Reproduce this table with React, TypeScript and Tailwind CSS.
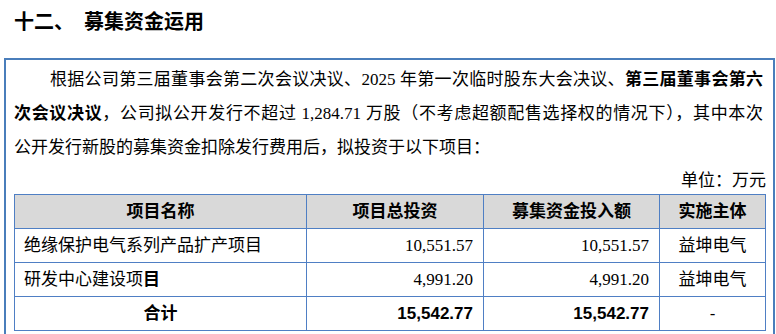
const serif = "font-['Liberation_Serif','Noto_Sans_CJK_SC',serif]";
const sans = "font-['Liberation_Sans','Noto_Sans_CJK_SC',sans-serif]";

const rows = [
	{ name: '绝缘保护电气系列产品扩产项目', total: '10,551.57', raised: '10,551.57', owner: '益坤电气' },
	{ name: '研发中心建设项', tail: '目', total: '4,991.20', raised: '4,991.20', owner: '益坤电气' },
];

const cell = 'border border-[#4f7fc4] h-[34px] p-0';

const App = () => {
	return (
		<div className="w-[776px] h-[334px] overflow-hidden bg-white text-black">
			{/* heading */}
			<div className={`${sans} flex items-center pl-[14px] pt-[8px] h-[58px] pb-[22px] text-[20px] font-bold leading-[28px]`}>
				<span>十二、</span>
				<span className="ml-[10px]">募集资金运用</span>
			</div>

			<div className="ml-[4px] mr-[1px] border-l-2 border-t-2 border-r-2 border-[#4a7ebb] h-[300px]">
				<div className={`${serif} pl-[8px] pr-[10px] pt-[3px] text-[17px] leading-[34px]`}>
					<div className="text-justify [text-align-last:justify] indent-[36px]">
						根据公司第三届董事会第二次会议决议、2025 年第一次临时股东大会决议、
						<span className={`${sans} font-bold`}>第三届董事会第六</span>
					</div>
					<div className="text-justify [text-align-last:justify]">
						<span className={`${sans} font-bold`}>次会议决议</span>，公司拟公开发行不超过 1,284.71
						万股（不考虑超额配售选择权的情况下），其中本次
					</div>
					<div>公开发行新股的募集资金扣除发行费用后，拟投资于以下项目：</div>
					<div className="h-[29px] flex items-end justify-end leading-[26px] mr-[-3px]">
						单位：万元
					</div>
				</div>

				<div className="ml-[8px] mr-[7px]">
					<table className="w-full table-fixed border-collapse text-[17px]">
						<colgroup>
							<col className="w-[292px]" />
							<col className="w-[177px]" />
							<col className="w-[176px]" />
							<col />
						</colgroup>
						<thead>
							<tr className={`${sans} bg-[#d9d9d9] font-bold`}>
								<th className={cell}>项目名称</th>
								<th className={cell}>项目总投资</th>
								<th className={cell}>募集资金投入额</th>
								<th className={cell}>实施主体</th>
							</tr>
						</thead>
						<tbody className={serif}>
							{rows.map((r) => (
								<tr key={r.name}>
									<td className={`${cell} text-left pl-[9px]`}>
										{r.name}
										{r.tail && <span className={`${sans} font-bold`}>{r.tail}</span>}
									</td>
									<td className={`${cell} text-right pr-[10px]`}>{r.total}</td>
									<td className={`${cell} text-right pr-[10px]`}>{r.raised}</td>
									<td className={`${cell} text-center`}>{r.owner}</td>
								</tr>
							))}
							<tr className={`${sans} font-bold`}>
								<td className={`${cell} text-center`}>合计</td>
								<td className={`${cell} text-right pr-[10px]`}>15,542.77</td>
								<td className={`${cell} text-right pr-[10px]`}>15,542.77</td>
								<td className={`${cell} text-center font-normal`}>-</td>
							</tr>
						</tbody>
					</table>
				</div>
			</div>
		</div>
	);
};

export default App;
